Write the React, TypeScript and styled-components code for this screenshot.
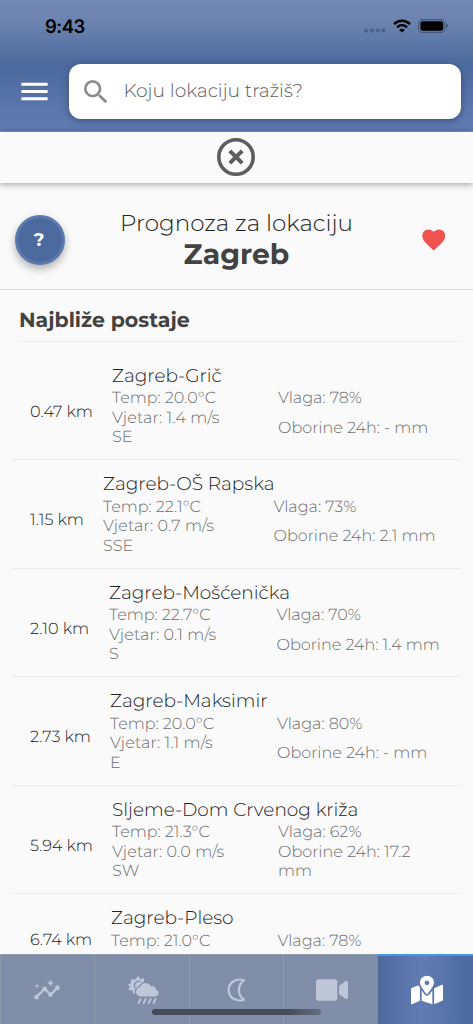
import React from "react";
import styled, { createGlobalStyle } from "styled-components";
import { MdMenu, MdSearch, MdInsights, MdFavorite } from "react-icons/md";
import { FaVideo, FaMapMarkedAlt } from "react-icons/fa";

const GlobalStyle = createGlobalStyle`
  *, *::before, *::after { box-sizing: border-box; }
  body {
    margin: 0;
    background: #fafafa;
    color: #212121;
    font-family: Montserrat, Inter, "Open Sans", sans-serif;
    font-weight: 300;
    text-rendering: geometricPrecision;
    overflow: hidden;
  }
`;

const Screen = styled.div`
  width: 473px;
  height: 1024px;
  display: flex;
  flex-direction: column;
  overflow: hidden;
  position: relative;
`;

const Header = styled.header`
  height: 132px;
  flex: none;
  background: linear-gradient(180deg, #7389b4 0, #6b83af 22px, #4c6a9e 65px, #617cb3 132px);
  border-bottom: 1px solid #8494bb;
`;

const StatusBar = styled.div`
  height: 64px;
  padding: 0 24px 12px 45px;
  display: flex;
  align-items: center;
  justify-content: space-between;
`;

const Clock = styled.span`
  font: 600 18.5px/24px Inter, sans-serif;
  letter-spacing: -0.5px;
  color: #000;
  padding-top: 1px;
`;

const StatusIcons = styled.div`
  display: flex;
  align-items: center;
`;

const SearchRow = styled.div`
  display: flex;
  align-items: center;
  padding: 0 12px 0 17px;
  color: #fff;
`;

const MenuIcon = styled(MdMenu)`
  width: 35px;
  height: 35px;
  flex: none;
  margin-right: 17px;
`;

const SearchBox = styled.div`
  flex: 1;
  height: 55px;
  border-radius: 12px;
  background: #fff;
  box-shadow: 0 2px 7px rgba(0, 0, 0, 0.32);
  display: flex;
  align-items: center;
  color: #8a8a8a;
  svg { width: 32px; height: 32px; margin-left: 11px; }
`;

const Placeholder = styled.span`
  margin-left: 11.5px;
  margin-top: -3px;
  font-size: 18.6px;
  white-space: nowrap;
  color: #5c5c5c;
`;

const CloseBar = styled.div`
  height: 51px;
  flex: none;
  display: flex;
  justify-content: center;
  align-items: center;
  background: #fafafa;
  box-shadow: 0 1px 7px rgba(0, 0, 0, 0.4);
  color: #5d5d5d;
  padding: 0 1px 1px 0;
`;

const Hero = styled.section`
  height: 107px;
  flex: none;
  display: grid;
  grid-template-columns: 50px 1fr 50px;
  align-items: center;
  padding: 7px 15px 0;
  border-bottom: 1px solid #dedede;
`;

const HelpButton = styled.button`
  width: 50px;
  height: 50px;
  border-radius: 50%;
  border: 3px solid #5b78af;
  background: #4c6a9e;
  color: #fff;
  font: 700 18.5px Montserrat, sans-serif;
  padding: 0 2px 0 0;
  box-shadow: 0 4px 8px rgba(0, 0, 0, 0.3);
`;

const HeroText = styled.h1`
  margin: -1px 0 0;
  font-size: 23px;
  line-height: 31px;
  font-weight: 300;
  text-align: center;
  strong {
    display: block;
    font-size: 28.3px;
    line-height: 32px;
    font-weight: 700;
    color: #424242;
  }
`;

const Heart = styled(MdFavorite)`
  width: 27.5px;
  height: 27.5px;
  margin-left: 11.5px;
  color: #ef5350;
`;

const SectionTitle = styled.h2`
  flex: none;
  margin: 0 12px 0 19px;
  height: 52px;
  line-height: 61px;
  font-size: 20.5px;
  font-weight: 700;
  color: #424242;
  border-bottom: 1px solid #ececec;
`;

const List = styled.div`
  flex: 1;
  min-height: 0;
  overflow: hidden;
  padding: 9.5px 12px 0 12px;
`;

const Row = styled.article`
  height: 108.5px;
  display: flex;
  padding: 13px 17px 0 18px;
  border-bottom: 1px solid #ececec;
`;

const Distance = styled.div<{ $width: number; $short?: boolean }>`
  width: ${(p) => p.$width}px;
  flex: none;
  padding-top: ${(p) => (p.$short ? 24 : 38)}px;
  font-size: 16.1px;
  line-height: 19.5px;
  white-space: nowrap;
`;

const Station = styled.div`
  flex: 1;
`;

const Name = styled.div`
  font-size: 18.5px;
  line-height: 22.5px;
  height: 24.75px;
  width: 0;
  white-space: nowrap;
`;

const Columns = styled.div`
  display: grid;
  grid-template-columns: 1fr 1fr;
`;

const Measures = styled.div<{ $gap?: number }>`
  display: flex;
  flex-direction: column;
  gap: ${(p) => p.$gap ?? 0}px;
  font-size: 16px;
  line-height: 19.5px;
  color: #6c6c6c;
  white-space: nowrap;
`;

const Wind = styled.span`
  letter-spacing: 0.14px;
`;

const Nav = styled.nav`
  height: 70px;
  flex: none;
  display: grid;
  grid-template-columns: repeat(4, 94.3px) 1fr;
  background: #808ea9;
`;

const Tab = styled.div<{ $active?: boolean }>`
  display: flex;
  align-items: center;
  justify-content: center;
  padding-left: 2px;
  color: ${(p) => (p.$active ? "#fff" : "#bec6d7")};
  background: ${(p) => (p.$active ? "linear-gradient(90deg, #4c6a9e, #617cb3 45%, #4c6a9e)" : "#808ea9")};
  border-top: ${(p) => (p.$active ? "2px solid #3a9af0" : "1px solid #8f9fae")};
  border-left: 1px solid ${(p) => (p.$active ? "#3a9af0" : "#8c9aad")};
`;

const InsightsIcon = styled(MdInsights)`
  width: 28px;
  height: 28px;
  margin-right: 3px;
`;

const HomeIndicator = styled.div`
  position: absolute;
  left: 152px;
  bottom: 9px;
  width: 169px;
  height: 6px;
  border-radius: 3px;
  background: linear-gradient(90deg, #454b57 80%, #646e82);
`;

const CloseIcon = () => (
  <svg width="38" height="38" viewBox="0 0 38 38" fill="none" stroke="currentColor">
    <circle cx="19" cy="19" r="17.200" strokeWidth="3.600" />
    <path d="m12.800 12.800 12.400 12.400m0-12.400-12.400 12.400" strokeWidth="4" />
  </svg>
);

const SignalDots = () => (
  <svg width="22" height="14" viewBox="0 0 22 14" fill="#4e6187">
    {[2.2, 8, 13.7, 19.4].map((x) => <circle key={x} cx={x} cy="11.5" r="2.1" />)}
  </svg>
);

const Wifi = () => (
  <svg width="18" height="14" viewBox="0 0 18 14" style={{ marginLeft: 7 }} fill="none" stroke="#000" strokeWidth="2.5">
    <path d="M1 5.100C5.500.6 12.500.6 17 5.100" />
    <path d="M4 8.300c2.900-2.800 7.100-2.800 10 0" />
    <path d="M9 13.600 6.200 10.900c1.600-1.400 4-1.400 5.600 0z" fill="#000" stroke="none" />
  </svg>
);

const Battery = () => (
  <svg width="31" height="14" viewBox="0 0 31 14" style={{ marginLeft: 7 }}>
    <rect x=".6" y=".6" width="26.3" height="12.8" rx="4" fill="none" stroke="#435577" strokeWidth="1.1" />
    <rect x="2.4" y="2.2" width="22.8" height="9.6" rx="2.4" fill="#000" />
    <path d="M28.500 4.600c1.600.7 1.600 4.100 0 4.800z" fill="#34435f" />
  </svg>
);

const SunRain = () => (
  <svg width="31" height="28" viewBox="0 0 31 28" fill="currentColor" style={{ marginLeft: 2 }}>
    <path d="M10.400 0 12.300 3.300 16 2.100 15.900 6 18 8 9 17.200 5.300 18 4.300 14.200.5 14 1.900 10.500 0 8.700 3.200 7 2.800 3.200 6.800 3.700z" />
    <path d="M7.300 12.600A4.600 4.600 0 0 1 12.400 5.500" fill="none" stroke="#808ea9" strokeWidth="1.2" />
    <path
      d="M13 20.500a4.700 4.700 0 0 1-.7-9.400C13 8.500 15.300 7 17.700 7c2.500 0 4.400 1.300 5.500 3.400 2.900-.4 5 1.400 5.100 3.700 3.500 1 3.200 6.400-1.500 6.400z"
      stroke="#808ea9"
      strokeWidth="2.400"
      paintOrder="stroke"
    />
    <path d="m12.600 23-2 4m7-4-2 4m7-4-2 4m7-4-2 4" stroke="currentColor" strokeWidth="1.800" strokeLinecap="round" />
  </svg>
);

const Moon = () => (
  <svg width="19" height="24" viewBox="0 0 19 24" fill="none" stroke="currentColor" strokeWidth="2.200" style={{ marginRight: 2 }}>
    <path d="M17 2.300C8.500-.5 1.600 5 1.600 12s6.900 12.500 15.400 9.700c-6.800-4.700-6.800-14.700 0-19.400z" strokeLinejoin="round" />
  </svg>
);

type StationData = {
  km: string;
  offset: number;
  name: string;
  temp: string;
  wind?: string;
  dir?: string;
  humidity: string;
  rain?: string[];
};

const stations: StationData[] = [
  { km: "0.47", offset: 82, name: "Zagreb-Grič", temp: "20.0", wind: "1.4", dir: "SE", humidity: "78", rain: ["Oborine 24h: - mm"] },
  { km: "1.15", offset: 73, name: "Zagreb-OŠ Rapska", temp: "22.1", wind: "0.7", dir: "SSE", humidity: "73", rain: ["Oborine 24h: 2.1 mm"] },
  { km: "2.10", offset: 79, name: "Zagreb-Mošćenička", temp: "22.7", wind: "0.1", dir: "S", humidity: "70", rain: ["Oborine 24h: 1.4 mm"] },
  { km: "2.73", offset: 80, name: "Zagreb-Maksimir", temp: "20.0", wind: "1.1", dir: "E", humidity: "80", rain: ["Oborine 24h: - mm"] },
  { km: "5.94", offset: 82, name: "Sljeme-Dom Crvenog križa", temp: "21.3", wind: "0.0", dir: "SW", humidity: "62", rain: ["Oborine 24h: 17.2", "mm"] },
  { km: "6.74", offset: 81, name: "Zagreb-Pleso", temp: "21.0", humidity: "78" },
];

export default function App() {
  return (
    <>
      <GlobalStyle />
      <Screen>
        <Header>
          <StatusBar>
            <Clock>9:43</Clock>
            <StatusIcons>
              <SignalDots />
              <Wifi />
              <Battery />
            </StatusIcons>
          </StatusBar>
          <SearchRow>
            <MenuIcon />
            <SearchBox>
              <MdSearch />
              <Placeholder>Koju lokaciju tražiš?</Placeholder>
            </SearchBox>
          </SearchRow>
        </Header>
        <CloseBar><CloseIcon /></CloseBar>
        <Hero>
          <HelpButton>?</HelpButton>
          <HeroText>Prognoza za lokaciju<strong>Zagreb</strong></HeroText>
          <Heart />
        </Hero>
        <SectionTitle>Najbliže postaje</SectionTitle>
        <List>
          {stations.map((s) => (
            <Row key={s.km}>
              <Distance $width={s.offset} $short={!s.wind}>{s.km} km</Distance>
              <Station>
                <Name>{s.name}</Name>
                <Columns>
                  <Measures>
                    <span>Temp: {s.temp}°C</span>
                    {s.wind && <Wind>Vjetar: {s.wind} m/s</Wind>}
                    {s.dir && <span>{s.dir}</span>}
                  </Measures>
                  <Measures $gap={s.rain?.length === 1 ? 10 : 0}>
                    <span>Vlaga: {s.humidity}%</span>
                    {s.rain?.map((line) => <span key={line}>{line}</span>)}
                  </Measures>
                </Columns>
              </Station>
            </Row>
          ))}
        </List>
        <Nav>
          <Tab><InsightsIcon /></Tab>
          <Tab><SunRain /></Tab>
          <Tab><Moon /></Tab>
          <Tab><FaVideo size={32} /></Tab>
          <Tab $active><FaMapMarkedAlt size={32} /></Tab>
        </Nav>
        <HomeIndicator />
      </Screen>
    </>
  );
}
